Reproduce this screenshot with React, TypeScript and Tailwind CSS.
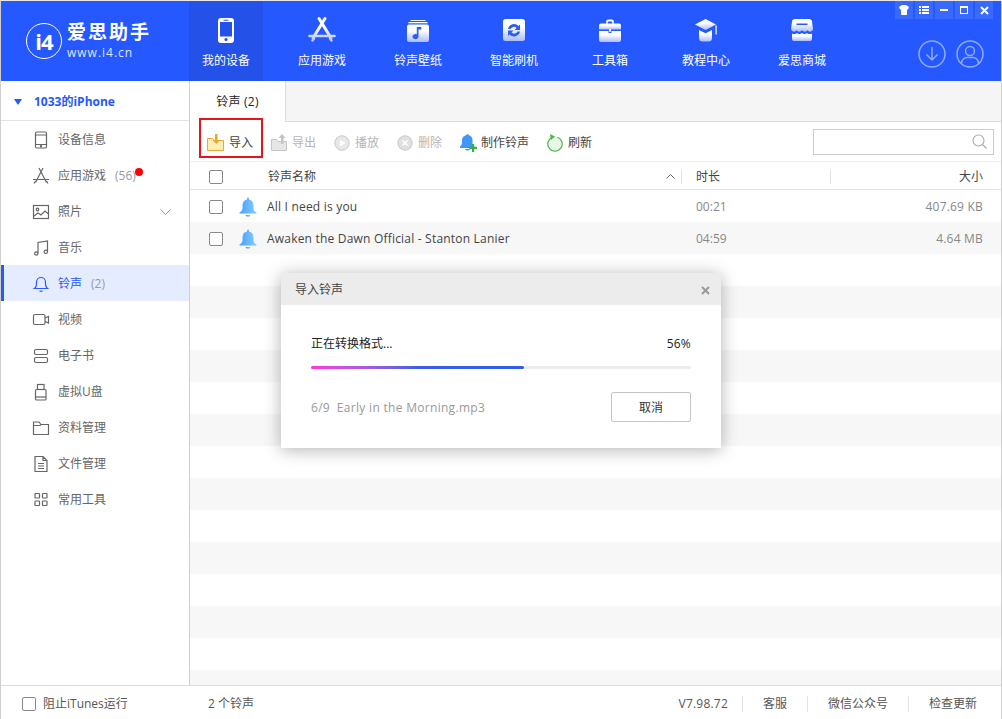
import type { ReactNode } from 'react'

const font = { fontFamily: '"Open Sans", "Noto Sans CJK SC", sans-serif' }

function Ico({ children, w = 18, h = 18 }: { children: ReactNode; w?: number; h?: number }) {
  return (
    <svg width={w} height={h} viewBox={`0 0 ${w} ${h}`} fill="none" stroke="#666" strokeWidth="1.2" className="shrink-0">
      {children}
    </svg>
  )
}

const sideItems: { label: string; count?: string; icon: ReactNode; dot?: boolean; arrow?: boolean; active?: boolean }[] = [
  { label: '设备信息', icon: <Ico><rect x="3.5" y="1" width="11" height="16" rx="1.5" /><path d="M3.5 4h11M3.5 13.5h11" /><circle cx="9" cy="15.2" r=".6" /></Ico> },
  { label: '应用游戏', count: '(56)', dot: true, icon: <Ico><path d="M7 1l7.500 14.500M11 1L3.500 15.500M1 12.500h16M2 16.500l1.500-2.500M16 16.500L14.500 14" /></Ico> },
  { label: '照片', arrow: true, icon: <Ico><rect x="1.5" y="2.5" width="15" height="13" /><circle cx="5.5" cy="6.5" r="1.3" /><path d="M2 13l4-3 3 2 4-4 3.5 3" /></Ico> },
  { label: '音乐', icon: <Ico><path d="M6 14V3.5L15.5 2v10.5" /><circle cx="4.3" cy="14.5" r="1.7" /><circle cx="13.8" cy="12.8" r="1.7" /></Ico> },
  { label: '铃声', count: '(2)', active: true, icon: <Ico><g stroke="#2558ff"><path d="M2.5 13.5c1.5-1 2-2 2-4.5V7a4.5 4.5 0 019 0v2c0 2.500.5 3.500 2 4.500z" /><path d="M7.500 16.200h3" /></g></Ico> },
  { label: '视频', icon: <Ico><rect x="1.500" y="3.500" width="11.500" height="10" rx="1.500" /><path d="M13 7l3.500-1.500v6.500L13 10.500" /></Ico> },
  { label: '电子书', icon: <Ico><rect x="2.500" y="2.500" width="13" height="5" rx="1.500" /><rect x="2.500" y="10.500" width="13" height="5" rx="1.500" /></Ico> },
  { label: '虚拟U盘', icon: <Ico><rect x="3.500" y="6.500" width="10.500" height="10.500" rx="1" /><rect x="5.500" y="1.500" width="6.500" height="5" /><path d="M3.500 14h10.500" /></Ico> },
  { label: '资料管理', icon: <Ico><path d="M1.500 15.500V3h5.500l2 2.500h7.500v10zM1.500 6.500h6.500l1-1" /></Ico> },
  { label: '文件管理', icon: <Ico><path d="M3 1.500h8l4 4v11H3zM11 1.500v4h4M6 8.500h6M6 11h6M6 13.500h6" /></Ico> },
  { label: '常用工具', icon: <Ico><rect x="3" y="2.500" width="4.500" height="4.500" rx=".5" /><rect x="10.500" y="2.500" width="4.500" height="4.500" rx=".5" /><rect x="3" y="10" width="4.500" height="4.500" rx=".5" /><rect x="10.500" y="10" width="4.500" height="4.500" rx=".5" /></Ico> },
]

function NavSvg({ children, id }: { children: ReactNode; id: string }) {
  return (
    <svg width="34" height="30" viewBox="0 0 34 30" fill={`url(#${id})`}>
      <defs>
        <linearGradient id={id} x1="0" y1="0" x2="0" y2="1">
          <stop offset="0.35" stopColor="#ffffff" />
          <stop offset="1" stopColor="#a9bdff" />
        </linearGradient>
      </defs>
      {children}
    </svg>
  )
}

const navItems: { label: string; active?: boolean; icon: ReactNode }[] = [
  {
    label: '我的设备',
    active: true,
    icon: (
      <svg width="34" height="30" viewBox="0 0 34 30">
        <rect x="9" y="2" width="16" height="25" rx="3" fill="#fff" />
        <rect x="11" y="6" width="12" height="14.500" fill="#2452e8" />
        <rect x="14.500" y="3.700" width="5" height="1" fill="#2452e8" />
        <circle cx="17" cy="23.500" r="1.600" fill="#2452e8" />
      </svg>
    ),
  },
  {
    label: '应用游戏',
    icon: (
      <svg width="34" height="30" viewBox="0 0 34 30" fill="none">
        <defs>
          <linearGradient id="navApp" gradientUnits="userSpaceOnUse" x1="0" y1="2" x2="0" y2="26">
            <stop offset="0.4" stopColor="#ffffff" />
            <stop offset="1" stopColor="#a9bdff" />
          </linearGradient>
        </defs>
        <path d="M14 2.500L26 22M20 2.500L8 22" stroke="url(#navApp)" strokeWidth="3" strokeLinecap="round" />
        <path d="M4.500 20h25" stroke="url(#navApp)" strokeWidth="2.600" strokeLinecap="round" />
        <path d="M7.500 24.500l1.500-2M26.500 24.500l-1.500-2" stroke="url(#navApp)" strokeWidth="2.600" strokeLinecap="round" />
      </svg>
    ),
  },
  {
    label: '铃声壁纸',
    icon: (
      <NavSvg id="navBell">
        <rect x="9.500" y="4" width="15" height="1" />
        <rect x="7.500" y="6" width="19" height="1.500" />
        <rect x="6" y="8.500" width="22" height="17.500" rx="2" />
        <path d="M17.500 11v9.500a3 2.600 0 11-1.700-2.300V11h4.500v2.500h-2.800z" fill="#2e5ef0" />
      </NavSvg>
    ),
  },
  {
    label: '智能刷机',
    icon: (
      <NavSvg id="navFlash">
        <rect x="6" y="3" width="22" height="22" rx="2.500" />
        <path d="M11 13a6.200 6.200 0 0110.500-3l1.500-1.500v5.500h-5.500l2-2a3.700 3.700 0 00-6 1zM23 15.500a6.200 6.200 0 01-10.500 3L11 20v-5.500h5.500l-2 2a3.700 3.700 0 006-1z" fill="#2e5ef0" />
      </NavSvg>
    ),
  },
  {
    label: '工具箱',
    icon: (
      <NavSvg id="navBox">
        <path d="M13 8V6A2.500 2.500 0 0115.500 3.500h3A2.500 2.500 0 0121 6v2h-2V6a.5.5 0 00-.5-.5h-3a.5.5 0 00-.5.5v2z" />
        <path d="M6 9.500a2 2 0 012-2h18a2 2 0 012 2v4H6z" />
        <path d="M6 15h9.500v2h3v-2H28v9a2 2 0 01-2 2H8a2 2 0 01-2-2z" />
        <rect x="16" y="13" width="2" height="3" />
      </NavSvg>
    ),
  },
  {
    label: '教程中心',
    icon: (
      <NavSvg id="navCap">
        <path d="M16.500 3L6 8.500l10.500 5.500L27 8.500z" />
        <path d="M10 14l6.500 3.300L23 14v8a3.500 3.500 0 01-3.500 3.500h-6A3.500 3.500 0 0110 22z" />
        <rect x="26.500" y="9.500" width="1.200" height="9" fill="#fff" />
      </NavSvg>
    ),
  },
  {
    label: '爱思商城',
    icon: (
      <NavSvg id="navShop">
        <path d="M10 3h14a3 3 0 013 2.800l1 7a3 3 0 01-5.500 1.500 3.300 3.300 0 01-5.500 0 3.300 3.300 0 01-5.500 0A3 3 0 016 12.800l1-7A3 3 0 0110 3zM11.500 7.500V9h11V7.500z" fillRule="evenodd" />
        <path d="M7 17.500c2 1 4 .5 5-.5 1.500 1.300 3.500 1.300 5 0 1.500 1.300 3.500 1.300 5 0 1 1 3 1.500 5 .5V23a2 2 0 01-2 2H9a2 2 0 01-2-2z" />
      </NavSvg>
    ),
  },
]

function WinBtn({ children }: { children: ReactNode }) {
  return <div className="flex h-[18px] w-[18px] items-center justify-center bg-[#3a69ff]">{children}</div>
}

function ToolBtn({ icon, label, off }: { icon: ReactNode; label: string; off?: boolean }) {
  return (
    <div className="flex items-center gap-[5px]">
      {icon}
      <span className={off ? 'text-[#b5b5b5]' : 'text-[#444]'}>{label}</span>
    </div>
  )
}

function Check() {
  return <div className="h-[14px] w-[14px] shrink-0 rounded-[2px] border border-[#8a8a8a] bg-white" />
}

function BlueBell() {
  return (
    <svg width="18" height="20" viewBox="0 0 18 20" className="block shrink-0">
      <defs>
        <linearGradient id="bell" x1="0" y1="0" x2="1" y2="0">
          <stop offset="0" stopColor="#45a0ff" />
          <stop offset="1" stopColor="#8accff" />
        </linearGradient>
      </defs>
      <path d="M8 1.500a1 1 0 012 0v1c3 .6 4.500 3 4.500 6v2.500c0 2 1 3.500 3 4.500v1H.5v-1c2-1 3-2.500 3-4.500V8.500c0-3 1.500-5.400 4.500-6z" fill="url(#bell)" />
      <path d="M6.500 18h5a2.500 1.800 0 01-5 0z" fill="url(#bell)" />
    </svg>
  )
}

const rows = [
  { name: 'All I need is you', time: '00:21', size: '407.69 KB' },
  { name: 'Awaken the Dawn Official - Stanton Lanier', time: '04:59', size: '4.64 MB' },
]

export default function App() {
  return (
    <div style={font} className="relative flex h-[719px] w-[1002px] flex-col overflow-hidden border-x border-t border-x-[#cfcfcf] border-t-[#e8e8e8] bg-white text-xs">
      {/* header */}
      <header className="flex h-[80px] shrink-0 bg-[#2558ff] text-white">
        <div className="flex w-[188px] shrink-0 items-center pl-[25px]">
          <div className="flex h-[36px] w-[36px] items-center justify-center rounded-full border-[1.5px] border-white">
            <span className="text-[22px] font-bold leading-none tracking-[-1px]">i4</span>
          </div>
          <div className="ml-[5px] flex flex-col">
            <span className="text-[19px] font-bold leading-[19px] tracking-[2px]">爱思助手</span>
            <span className="mt-[5px] text-xs leading-[12px] tracking-[1px] text-[#dfe7ff]">www.i4.cn</span>
          </div>
        </div>
        <nav className="flex gap-[22px]">
          {navItems.map((n) => (
            <div key={n.label} className={`flex w-[74px] flex-col items-center pt-[15px] ${n.active ? 'bg-[#2452e8]' : ''}`}>
              {n.icon}
              <span className="mt-[6px] leading-[17px]">{n.label}</span>
            </div>
          ))}
        </nav>
        <div className="ml-auto flex flex-col items-end pr-[8px]">
          <div className="flex gap-[2px]">
            <WinBtn><svg width="10" height="10" viewBox="0 0 10 10" fill="#fff"><path d="M0 2l3-2h4l3 2-1 2.500H8V10H2V4.500H1z" /></svg></WinBtn>
            <WinBtn><svg width="10" height="10" viewBox="0 0 10 10" fill="#fff"><path d="M0 1h2v2H0zM3 1h7v2H3zM0 4h2v2H0zM3 4h7v2H3zM0 7h2v2H0zM3 7h7v2H3z" /></svg></WinBtn>
            <WinBtn><div className="h-[2px] w-[8px] bg-white" /></WinBtn>
            <WinBtn><div className="h-[8px] w-[8px] border border-t-2 border-white" /></WinBtn>
            <WinBtn><svg width="9" height="9" viewBox="0 0 9 9" stroke="#fff" strokeWidth="2"><path d="M1 1l7 7M8 1L1 8" /></svg></WinBtn>
          </div>
          <div className="mt-[21px] mr-[9px] flex gap-[10px]">
            <svg width="28" height="28" viewBox="0 0 28 28" fill="none" stroke="#8fabff" strokeWidth="1.500">
              <circle cx="14" cy="14" r="13" />
              <path d="M14 7v13M8.500 14.500L14 20l5.500-5.500" />
            </svg>
            <svg width="28" height="28" viewBox="0 0 28 28" fill="none" stroke="#8fabff" strokeWidth="1.500">
              <circle cx="14" cy="14" r="13" />
              <circle cx="14" cy="11" r="4.500" />
              <path d="M5.500 23.500c0-4 3-6 5.500-6h6c2.500 0 5.500 2 5.500 6" />
            </svg>
          </div>
        </div>
      </header>

      <div className="flex min-h-0 flex-1">
        {/* sidebar */}
        <aside className="w-[189px] shrink-0 border-r border-[#cfcfcf]">
          <div className="flex h-[40px] items-center border-b border-[#e3e3e3] pl-[13px] pt-[2px] font-bold text-[#2558ff]">
            <span className="mr-[12px] h-0 w-0 border-x-[4px] border-t-[6px] border-x-transparent border-t-[#2558ff]" />
            1033的iPhone
          </div>
          {sideItems.map((s) => (
            <div key={s.label} className={`relative flex h-[36px] items-center pt-[2px] ${s.active ? 'border-l-[3px] border-[#2558ff] bg-[#e6ecff] pl-[28px] text-[#2558ff]' : 'pl-[31px] text-[#666]'}`}>
              {s.icon}
              <span className="ml-[8px]">{s.label}</span>
              {s.count && <span className="ml-[9px] text-[#999]">{s.count}</span>}
              {s.dot && <span className="absolute left-[134px] top-[11px] h-[8px] w-[8px] rounded-full bg-[#ff0000]" />}
              {s.arrow && (
                <svg width="11" height="6" viewBox="0 0 11 6" fill="none" stroke="#999" className="ml-auto mr-[18px]">
                  <path d="M.5.5l5 5 5-5" />
                </svg>
              )}
            </div>
          ))}
        </aside>

        {/* main */}
        <main className="flex min-w-0 flex-1 flex-col">
          <div className="flex h-[41px] shrink-0">
            <div className="flex w-[95px] items-center justify-center tracking-[0.2px] text-[#222]">铃声 (2)</div>
            <div className="flex-1 border-b border-l border-[#dcdcdc] bg-[#f5f5f5]" />
          </div>
          <div className="flex h-[40px] shrink-0 items-center border-b border-[#efefef] pl-[17px] pr-[7px]">
            <div className="flex items-center gap-[18px] pt-[2px]">
              <ToolBtn
                label="导入"
                icon={
                  <svg width="17" height="17" viewBox="0 0 17 17">
                    <path d="M.5 4.500h5l2 2h9v10H.5z" fill="#fdeeb5" stroke="#e2ab3c" />
                    <path d="M8 0h2.500v6H13l-3.700 4-3.800-4H8z" fill="#eda72b" />
                  </svg>
                }
              />
              <ToolBtn
                off
                label="导出"
                icon={
                  <svg width="16" height="17" viewBox="0 0 16 17">
                    <path d="M.5 5.500h5l1.500 2h8.500v9H.500z" fill="#e6e6e6" stroke="#c4c4c4" />
                    <path d="M11 0l3.500 4H12.500v6h-2.500V4H7.500z" fill="#c4c4c4" />
                  </svg>
                }
              />
              <ToolBtn
                off
                label="播放"
                icon={
                  <svg width="16" height="16" viewBox="0 0 16 16">
                    <circle cx="8" cy="8" r="7.200" fill="#e8e8e8" stroke="#c8c8c8" />
                    <path d="M6 4.500l5.500 3.500L6 11.500z" fill="#fff" />
                  </svg>
                }
              />
              <ToolBtn
                off
                label="删除"
                icon={
                  <svg width="16" height="16" viewBox="0 0 16 16">
                    <circle cx="8" cy="8" r="7.200" fill="#e0e0e0" stroke="#c8c8c8" />
                    <path d="M5.500 5.500l5 5M10.500 5.500l-5 5" stroke="#fff" strokeWidth="1.500" />
                  </svg>
                }
              />
              <div className="flex items-center gap-[3px]">
                <svg width="18" height="18" viewBox="0 0 18 18" className="shrink-0">
                  <path d="M6.500 1a1 1 0 012 0c2.500.5 4 2.500 4 5v3c0 1.500.6 2.500 1.500 3.500v1.500H0v-1.500c1.200-1 2-2 2-3.500V6c0-2.500 2-4.500 4.500-5z" fill="#3f97f8" />
                  <path d="M5 15h5a2.500 1.500 0 01-5 0z" fill="#3f97f8" />
                  <path d="M12 10h2.200v2.800H17V15h-2.800v3H12v-3H9.200v-2.200H12z" fill="#37ad4a" />
                </svg>
                <span className="text-[#444]">制作铃声</span>
              </div>
              <ToolBtn
                label="刷新"
                icon={
                  <svg width="16" height="18" viewBox="0 0 16 18" fill="none">
                    <circle cx="8" cy="10" r="7.200" fill="#e9f8e6" stroke="#4cb34a" strokeWidth="1.200" strokeDasharray="40 5" transform="rotate(-70 8 10)" />
                    <path d="M3 0l5 2.500L4 6z" fill="#4cb34a" />
                  </svg>
                }
              />
            </div>
            <div className="ml-auto flex h-[26px] w-[181px] items-center justify-end border border-[#cccccc] pr-[6px]">
              <svg width="15" height="15" viewBox="0 0 15 15" fill="none" stroke="#aaa" strokeWidth="1.100">
                <circle cx="6.500" cy="6.500" r="5.500" />
                <path d="M10.500 10.500l4 4" />
              </svg>
            </div>
          </div>

          <div className="flex h-[28px] shrink-0 items-center border-b border-[#e3e3e3] pt-[2px] text-[#444]">
            <div className="ml-[19px] flex w-[467px] items-center">
              <Check />
              <span className="ml-[45px]">铃声名称</span>
              <svg width="9" height="5" viewBox="0 0 9 5" fill="none" stroke="#666" className="ml-auto mr-[1px]">
                <path d="M.5 4.500l4-4 4 4" />
              </svg>
            </div>
            <div className="ml-[5px] h-[14px] w-px bg-[#e3e3e3]" />
            <span className="ml-[14px] w-[134px]">时长</span>
            <div className="h-[14px] w-px bg-[#e3e3e3]" />
            <span className="mr-[18px] flex-1 text-right">大小</span>
          </div>

          <div className="min-h-0 flex-1 overflow-hidden">
            {Array.from({ length: 16 }).map((_, i) => {
              const r = rows[i]
              return (
                <div key={i} className={`flex h-[32px] items-center pt-[2px] ${i % 2 ? 'bg-[#f7f7f7]' : 'bg-white'}`}>
                  {r && (
                    <>
                      <div className="ml-[19px] flex w-[487px] items-center">
                        <Check />
                        <span className="ml-[16px]"><BlueBell /></span>
                        <span className="ml-[10px] tracking-[0.2px] text-[#444]">{r.name}</span>
                      </div>
                      <span className="w-[135px] text-[#888]">{r.time}</span>
                      <span className="mr-[18px] flex-1 text-right tracking-[0.2px] text-[#888]">{r.size}</span>
                    </>
                  )}
                </div>
              )
            })}
          </div>
        </main>
      </div>

      {/* status bar */}
      <footer className="flex h-[34px] shrink-0 items-center border-t border-[#dcdcdc] pt-[2px] text-[#555]">
        <div className="ml-[21px] flex w-[186px] items-center gap-[7px]">
          <Check />
          <span>阻止iTunes运行</span>
        </div>
        <span>2 个铃声</span>
        <div className="ml-auto flex items-center">
          <span className="tracking-[0.2px]">V7.98.72</span>
          <div className="ml-[14px] mr-[20px] h-[16px] w-px bg-[#e3e3e3]" />
          <span>客服</span>
          <div className="mx-[20px] h-[16px] w-px bg-[#e3e3e3]" />
          <span>微信公众号</span>
          <div className="mx-[20px] h-[16px] w-px bg-[#e3e3e3]" />
          <span className="mr-[24px]">检查更新</span>
        </div>
      </footer>

      {/* import dialog */}
      <div className="absolute left-[280px] top-[272px] w-[440px] bg-white shadow-[0_2px_16px_rgba(0,0,0,0.3)]">
        <div className="flex h-[32px] items-center justify-between bg-[#ececec] pl-[14px] pr-[11px] pt-[2px] text-[#444]">
          <span>导入铃声</span>
          <svg width="9" height="9" viewBox="0 0 9 9" stroke="#999" strokeWidth="2"><path d="M1 1l7 7M8 1L1 8" /></svg>
        </div>
        <div className="px-[30px] pt-[31px]">
          <div className="flex justify-between text-[#222]">
            <span>正在转换格式...</span>
            <span className="tracking-[0.2px]">56%</span>
          </div>
          <div className="mt-[14px] h-[3px] rounded-full bg-[#ececec]">
            <div className="h-full rounded-full bg-gradient-to-r from-[#ff35d8] via-[#3d5de8] to-[#2f5cf0]" style={{ width: '56%' }} />
          </div>
          <div className="mt-[23px] flex items-center justify-between pb-[26px]">
            <span className="pt-[2px] tracking-[0.3px] text-[#999]">6/9&nbsp;&nbsp;Early in the Morning.mp3</span>
            <div className="flex h-[30px] w-[80px] items-center justify-center rounded-[2px] border border-[#c4c4c4] pt-[2px] text-[#333]">取消</div>
          </div>
        </div>
      </div>

      {/* red annotation box */}
      <div className="absolute left-[198px] top-[117px] h-[40px] w-[64px] border-2 border-[#e8141c]" />
    </div>
  )
}
